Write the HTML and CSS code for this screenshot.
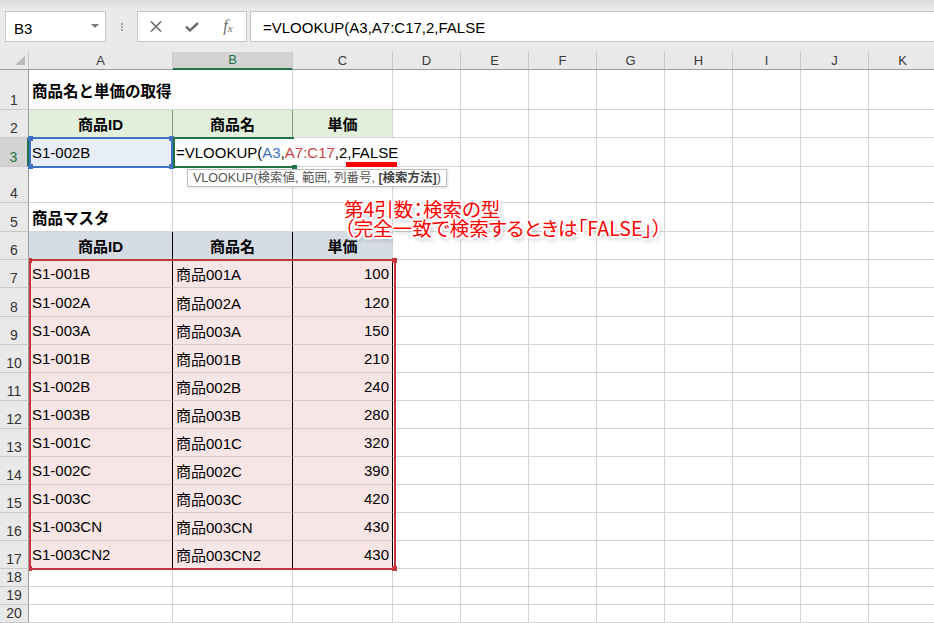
FILE: index.html
```html
<!DOCTYPE html>
<html lang="ja">
<head>
    <meta charset="UTF-8">
    <title>VLOOKUP - 商品名と単価の取得</title>
    <link rel="stylesheet" href="styles.css">
</head>
<body>
    <div class="formula-bar">
        <div class="name-box"><span>B3</span><span class="nb-arrow"></span></div>
        <div class="grip"><i></i><i></i><i></i></div>
        <div class="fx-buttons">
            <span class="fx-btn">
                <svg width="12" height="11" viewBox="0 0 12 11"><path d="M1 0.5 L11 10.5 M11 0.5 L1 10.5" stroke="#6b6b6b" stroke-width="1.6" fill="none"/></svg>
            </span>
            <span class="fx-btn">
                <svg width="14" height="10" viewBox="0 0 14 10"><path d="M1 4.6 L5 8.4 L13 1" stroke="#6b6b6b" stroke-width="2.4" fill="none"/></svg>
            </span>
            <span class="fx-btn fx-label">f<small>x</small></span>
        </div>
        <div class="formula-input">=VLOOKUP(A3,A7:C17,2,FALSE</div>
    </div>

    <div class="sheet">
        <div class="row col-head">
            <div class="corner"><span></span></div>
            <div>A</div><div class="sel">B</div><div>C</div><div>D</div><div>E</div>
            <div>F</div><div>G</div><div>H</div><div>I</div><div>J</div><div>K</div>
        </div>

        <div class="row h40">
            <div class="rh">1</div>
            <div class="c title spill">商品名と単価の取得</div>
            <div class="c"></div><div class="c"></div><div class="c"></div><div class="c"></div><div class="c"></div>
            <div class="c"></div><div class="c"></div><div class="c"></div><div class="c"></div><div class="c"></div>
        </div>

        <div class="row h28">
            <div class="rh">2</div>
            <div class="c hd green">商品ID</div>
            <div class="c hd green">商品名</div>
            <div class="c hd green last">単価</div>
            <div class="c"></div><div class="c"></div><div class="c"></div><div class="c"></div>
            <div class="c"></div><div class="c"></div><div class="c"></div><div class="c"></div>
        </div>

        <div class="row h29">
            <div class="rh sel">3</div>
            <div class="c ref-a">S1-002B</div>
            <div class="c edit">=VLOOKUP(<span class="ref1">A3</span>,<span class="ref2">A7:C17</span>,2,FALSE</div>
            <div class="c hide-r"></div>
            <div class="c"></div><div class="c"></div><div class="c"></div><div class="c"></div>
            <div class="c"></div><div class="c"></div><div class="c"></div><div class="c"></div>
        </div>

        <div class="row h36">
            <div class="rh">4</div>
            <div class="c"></div><div class="c"></div><div class="c"></div><div class="c"></div>
            <div class="c"></div><div class="c"></div><div class="c"></div><div class="c"></div>
            <div class="c"></div><div class="c"></div><div class="c"></div>
        </div>

        <div class="row h29">
            <div class="rh">5</div>
            <div class="c title">商品マスタ</div>
            <div class="c"></div><div class="c"></div><div class="c"></div><div class="c"></div><div class="c"></div>
            <div class="c"></div><div class="c"></div><div class="c"></div><div class="c"></div><div class="c"></div>
        </div>

        <div class="row h28">
            <div class="rh">6</div>
            <div class="c hd slate">商品ID</div>
            <div class="c hd slate">商品名</div>
            <div class="c hd slate last">単価</div>
            <div class="c"></div><div class="c"></div><div class="c"></div><div class="c"></div>
            <div class="c"></div><div class="c"></div><div class="c"></div><div class="c"></div>
        </div>

        <div class="row h28">
            <div class="rh">7</div>
            <div class="c pk">S1-001B</div><div class="c pk">商品001A</div><div class="c pk num">100</div>
            <div class="c"></div><div class="c"></div><div class="c"></div><div class="c"></div>
            <div class="c"></div><div class="c"></div><div class="c"></div><div class="c"></div>
        </div>
        <div class="row h29">
            <div class="rh">8</div>
            <div class="c pk">S1-002A</div><div class="c pk">商品002A</div><div class="c pk num">120</div>
            <div class="c"></div><div class="c"></div><div class="c"></div><div class="c"></div>
            <div class="c"></div><div class="c"></div><div class="c"></div><div class="c"></div>
        </div>
        <div class="row h28">
            <div class="rh">9</div>
            <div class="c pk">S1-003A</div><div class="c pk">商品003A</div><div class="c pk num">150</div>
            <div class="c"></div><div class="c"></div><div class="c"></div><div class="c"></div>
            <div class="c"></div><div class="c"></div><div class="c"></div><div class="c"></div>
        </div>
        <div class="row h28">
            <div class="rh">10</div>
            <div class="c pk">S1-001B</div><div class="c pk">商品001B</div><div class="c pk num">210</div>
            <div class="c"></div><div class="c"></div><div class="c"></div><div class="c"></div>
            <div class="c"></div><div class="c"></div><div class="c"></div><div class="c"></div>
        </div>
        <div class="row h28">
            <div class="rh">11</div>
            <div class="c pk">S1-002B</div><div class="c pk">商品002B</div><div class="c pk num">240</div>
            <div class="c"></div><div class="c"></div><div class="c"></div><div class="c"></div>
            <div class="c"></div><div class="c"></div><div class="c"></div><div class="c"></div>
        </div>
        <div class="row h28">
            <div class="rh">12</div>
            <div class="c pk">S1-003B</div><div class="c pk">商品003B</div><div class="c pk num">280</div>
            <div class="c"></div><div class="c"></div><div class="c"></div><div class="c"></div>
            <div class="c"></div><div class="c"></div><div class="c"></div><div class="c"></div>
        </div>
        <div class="row h28">
            <div class="rh">13</div>
            <div class="c pk">S1-001C</div><div class="c pk">商品001C</div><div class="c pk num">320</div>
            <div class="c"></div><div class="c"></div><div class="c"></div><div class="c"></div>
            <div class="c"></div><div class="c"></div><div class="c"></div><div class="c"></div>
        </div>
        <div class="row h28">
            <div class="rh">14</div>
            <div class="c pk">S1-002C</div><div class="c pk">商品002C</div><div class="c pk num">390</div>
            <div class="c"></div><div class="c"></div><div class="c"></div><div class="c"></div>
            <div class="c"></div><div class="c"></div><div class="c"></div><div class="c"></div>
        </div>
        <div class="row h28">
            <div class="rh">15</div>
            <div class="c pk">S1-003C</div><div class="c pk">商品003C</div><div class="c pk num">420</div>
            <div class="c"></div><div class="c"></div><div class="c"></div><div class="c"></div>
            <div class="c"></div><div class="c"></div><div class="c"></div><div class="c"></div>
        </div>
        <div class="row h28">
            <div class="rh">16</div>
            <div class="c pk">S1-003CN</div><div class="c pk">商品003CN</div><div class="c pk num">430</div>
            <div class="c"></div><div class="c"></div><div class="c"></div><div class="c"></div>
            <div class="c"></div><div class="c"></div><div class="c"></div><div class="c"></div>
        </div>
        <div class="row h28">
            <div class="rh">17</div>
            <div class="c pk">S1-003CN2</div><div class="c pk">商品003CN2</div><div class="c pk num">430</div>
            <div class="c"></div><div class="c"></div><div class="c"></div><div class="c"></div>
            <div class="c"></div><div class="c"></div><div class="c"></div><div class="c"></div>
        </div>

        <div class="row h18">
            <div class="rh">18</div>
            <div class="c"></div><div class="c"></div><div class="c"></div><div class="c"></div>
            <div class="c"></div><div class="c"></div><div class="c"></div><div class="c"></div>
            <div class="c"></div><div class="c"></div><div class="c"></div>
        </div>
        <div class="row h18">
            <div class="rh">19</div>
            <div class="c"></div><div class="c"></div><div class="c"></div><div class="c"></div>
            <div class="c"></div><div class="c"></div><div class="c"></div><div class="c"></div>
            <div class="c"></div><div class="c"></div><div class="c"></div>
        </div>
        <div class="row h18">
            <div class="rh">20</div>
            <div class="c"></div><div class="c"></div><div class="c"></div><div class="c"></div>
            <div class="c"></div><div class="c"></div><div class="c"></div><div class="c"></div>
            <div class="c"></div><div class="c"></div><div class="c"></div>
        </div>

        <!-- range highlights drawn over the grid -->
        <div class="range-a3">
            <span class="hd-tl"></span><span class="hd-tr"></span>
            <span class="hd-bl"></span><span class="hd-br"></span>
        </div>
        <div class="active-cell"><span class="hd-br"></span></div>
        <div class="range-master">
            <span class="hd-tl"></span><span class="hd-tr"></span>
            <span class="hd-bl"></span><span class="hd-br"></span>
        </div>

        <div class="marker"></div>
        <div class="tip">VLOOKUP(検索値, 範囲, 列番号, <b>[検索方法]</b>)</div>
        <div class="note">第4引数：検索の型<br>（完全一致で検索するときは「FALSE」）</div>
    </div>
</body>
</html>
```

FILE: styles.css
```css
* {
    box-sizing: border-box;
    margin: 0;
    padding: 0;
}

body {
    width: 934px;
    height: 623px;
    overflow: hidden;
    background: #fff;
    color: #000;
    font-family: "Liberation Sans Narrow", "Liberation Sans", "Noto Sans CJK JP", sans-serif;
    font-size: 15px;
}

/* formula bar */
.formula-bar {
    height: 52px;
    display: flex;
    align-items: flex-start;
    padding: 11px 0 0 5px;
    background: linear-gradient(#d9d9d9, #eaeaea 9px, #eaeaea);
}

.name-box {
    width: 101px;
    height: 31px;
    background: #fff;
    border: 1px solid #c6c6c6;
    display: flex;
    align-items: center;
    justify-content: space-between;
    padding: 3px 6px 0 8px;
}

.nb-arrow {
    border-left: 4px solid transparent;
    border-right: 4px solid transparent;
    border-top: 4px solid #7a7a7a;
    margin-top: -5px;
}

.grip {
    width: 31px;
    height: 31px;
    display: flex;
    flex-direction: column;
    align-items: center;
    justify-content: center;
    gap: 1px;
}

.grip i {
    width: 2px;
    height: 2px;
    background: #a8a8a8;
}

.fx-buttons {
    width: 110px;
    height: 31px;
    background: #fff;
    border: 1px solid #c6c6c6;
    display: flex;
    align-items: center;
}

.fx-btn {
    width: 36px;
    display: flex;
    justify-content: center;
    align-items: center;
}

.fx-label {
    font-family: "Liberation Serif", serif;
    font-style: italic;
    font-size: 16px;
    color: #6b6b6b;
    padding-bottom: 2px;
}

.fx-label small {
    font-size: 11px;
    margin-top: 4px;
}

.formula-input {
    flex: 1;
    height: 31px;
    margin-left: 3px;
    background: #fff;
    border: 1px solid #c6c6c6;
    border-right: none;
    padding: 2px 0 0 12px;
    display: flex;
    align-items: center;
    white-space: nowrap;
}

/* sheet grid */
.sheet {
    position: relative;
}

.row {
    display: grid;
    grid-template-columns: 29px 144px 120px 100px repeat(8, 68px);
}

.h18 { height: 18px; }
.h28 { height: 28px; }
.h29 { height: 29px; }
.h36 { height: 36px; }
.h40 { height: 40px; }

.col-head {
    height: 18px;
}

.col-head div {
    background: #e9e9e9;
    border-right: 1px solid #c9c9c9;
    border-bottom: 1px solid #9d9d9d;
    font-family: "Liberation Sans", sans-serif;
    font-size: 13px;
    color: #3a3a3a;
    display: flex;
    justify-content: center;
    align-items: flex-end;
    padding-bottom: 1px;
}

.col-head .corner {
    justify-content: flex-end;
    padding: 0 3px 4px 0;
}

.corner span {
    border-left: 10px solid transparent;
    border-bottom: 9px solid #b9b9b9;
}

.col-head .sel {
    background: #d3d3d3;
    color: #217346;
    border-bottom: 2px solid #217346;
}

.rh {
    background: #e9e9e9;
    border-right: 1px solid #9d9d9d;
    border-bottom: 1px solid #c9c9c9;
    font-family: "Liberation Sans", sans-serif;
    font-size: 14px;
    color: #333;
    display: flex;
    justify-content: center;
    align-items: flex-end;
    padding-bottom: 1px;
}

.rh.sel {
    background: #d3d3d3;
    color: #217346;
    border-right: 2px solid #217346;
}

.c {
    border-right: 1px solid #d4d4d4;
    border-bottom: 1px solid #d4d4d4;
    display: flex;
    align-items: center;
    padding: 0 3px;
    white-space: nowrap;
}

.title {
    font-family: "Noto Sans CJK JP", sans-serif;
    font-weight: bold;
    font-size: 15.5px;
}

.spill {
    border-right-color: #fff;
    position: relative;
    z-index: 1;
}

.hd {
    justify-content: center;
    font-weight: bold;
    font-family: "Liberation Sans", "Noto Sans CJK JP", sans-serif;
}

.green {
    background: #e2efda;
    border-right-color: #7f9b72;
}

.slate {
    background: #d6dce4;
    border-right-color: #000;
}

.green.last, .slate.last {
    border-right-color: #d4d4d4;
}

.pk {
    background: #f8e6e6;
    border-bottom-color: #d6caca;
    border-right-color: #000;
}

.num {
    justify-content: flex-end;
}

.ref-a {
    background: #e7eef8;
}

.edit {
    border-right-color: #fff;
    position: relative;
    z-index: 2;
}

.hide-r {
    border-right-color: #fff;
}

.ref1 { color: #3d6fc7; }
.ref2 { color: #cc3f42; }

/* overlays */
.range-a3, .active-cell, .range-master {
    position: absolute;
}

.range-a3 {
    left: 29px;
    top: 85px;
    width: 144px;
    height: 31px;
    border: 2px solid #3f72c6;
}

.active-cell {
    left: 173px;
    top: 85px;
    width: 121px;
    height: 31px;
    border: 2px solid #217346;
    border-right: none;
    z-index: 3;
}

.range-master {
    left: 29px;
    top: 207px;
    width: 367px;
    height: 311px;
    border: 2px solid #c4353f;
}

.range-a3 span, .active-cell span, .range-master span {
    position: absolute;
    width: 5px;
    height: 5px;
}

.range-a3 span { background: #3f72c6; }
.active-cell span { background: #217346; }
.range-master span { background: #c4353f; }

.hd-tl { left: -3px; top: -3px; }
.hd-tr { right: -3px; top: -3px; }
.hd-bl { left: -3px; bottom: -3px; }
.hd-br { right: -3px; bottom: -3px; }

.active-cell .hd-br { right: -3px; bottom: -4px; }
.range-master .hd-tl, .range-master .hd-bl { width: 3px; left: -2px; }

.marker {
    position: absolute;
    left: 346px;
    top: 110px;
    width: 51px;
    height: 5px;
    background: #ff0000;
    z-index: 4;
}

.tip {
    position: absolute;
    left: 187px;
    top: 117px;
    width: 260px;
    height: 18px;
    background: #fff;
    border: 1px solid #bdbdbd;
    box-shadow: 1px 1px 2px rgba(0, 0, 0, 0.12);
    font-family: "Liberation Sans", "Noto Sans CJK JP", sans-serif;
    font-size: 12.5px;
    line-height: 16px;
    color: #555;
    padding-left: 5px;
    white-space: nowrap;
    z-index: 4;
}

.tip b {
    color: #444;
}

.note {
    position: absolute;
    left: 344px;
    top: 147px;
    color: #ff0000;
    font-family: "Noto Sans CJK JP", sans-serif;
    font-size: 19.5px;
    line-height: 19px;
    font-feature-settings: "palt";
    white-space: nowrap;
    z-index: 5;
    text-shadow:
        -2px 0 #fff, 2px 0 #fff, 0 -2px #fff, 0 2px #fff,
        -1.5px -1.5px #fff, 1.5px 1.5px #fff, -1.5px 1.5px #fff, 1.5px -1.5px #fff,
        2px 3px 4px rgba(0, 0, 0, 0.35);
}
```
